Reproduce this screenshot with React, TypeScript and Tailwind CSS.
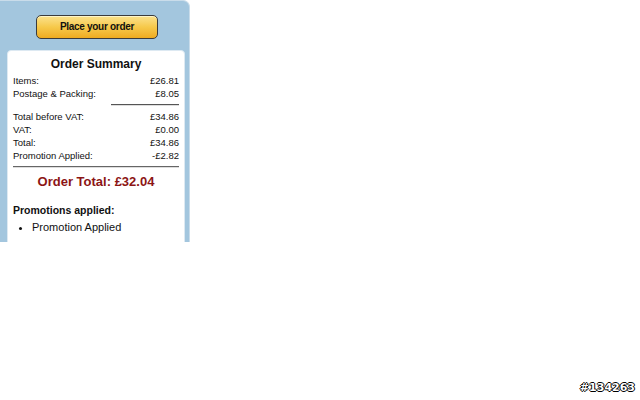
export default function App() {
  const rows1 = [
    ["Items:", "£26.81"],
    ["Postage & Packing:", "£8.05"],
  ];
  const rows2 = [
    ["Total before VAT:", "£34.86"],
    ["VAT:", "£0.00"],
    ["Total:", "£34.86"],
    ["Promotion Applied:", "-£2.82"],
  ];

  return (
    <div
      className="relative h-[400px] w-[640px] overflow-hidden bg-white"
      style={{ fontFamily: '"Liberation Sans", Arial, sans-serif' }}
    >
      <div className="h-[242px] w-[190px] overflow-hidden rounded-tr-[7px] border-r border-t border-[#c9dcea] bg-[#a3c6de] pt-[14px]">
        <div className="flex justify-center pl-[5px]">
          <button className="h-[24px] w-[122px] rounded-[5px] border border-[#3b3b3b] bg-gradient-to-b from-[#fbe28a] via-[#f6c94a] to-[#eeab1f] pb-[1px] text-[10px] font-bold tracking-[-0.3px] text-[#111] shadow-[inset_0_1px_0_#fff5c8]">
            Place your order
          </button>
        </div>
        <div className="ml-[7px] mt-[11px] h-[200px] w-[178px] rounded-t-[4px] border border-[#dde9f2] bg-white px-[5px] pt-[5px]">
          <h2 className="text-center text-[12px] font-bold leading-[16px] text-[#111]">Order Summary</h2>
          <div className="mt-[3px] text-[9.5px] leading-[12.7px] text-[#111]">
            {rows1.map(([l, v]) => (
              <div key={l} className="flex justify-between">
                <span>{l}</span>
                <span>{v}</span>
              </div>
            ))}
            <div className="mb-[5px] mt-[4px] ml-auto h-[2px] w-[68px] border-t border-[#555] bg-[#ddd]" />
            {rows2.map(([l, v]) => (
              <div key={l} className="flex justify-between">
                <span>{l}</span>
                <span>{v}</span>
              </div>
            ))}
          </div>
          <div className="mt-[4px] h-[2px] border-t border-[#666] bg-[#ddd]" />
          <div className="mt-[6px] text-center text-[13px] font-bold leading-[16px] text-[#8c1515]">
            Order Total: £32.04
          </div>
          <div className="mt-[13px] text-[10.5px] font-bold leading-[14px] text-[#111]">Promotions applied:</div>
          <ul className="mt-[3px] list-disc pl-[19px] text-[11px] leading-[14px] text-[#111]">
            <li>Promotion Applied</li>
          </ul>
        </div>
      </div>
      <div
        className="absolute bottom-[4px] right-[5px] text-[11px] font-bold text-white"
        style={{ fontFamily: '"DejaVu Sans", sans-serif', textShadow: "1px 0 #000, -1px 0 #000, 0 1px #000, 0 -1px #000" }}
      >
        #134263
      </div>
    </div>
  );
}
